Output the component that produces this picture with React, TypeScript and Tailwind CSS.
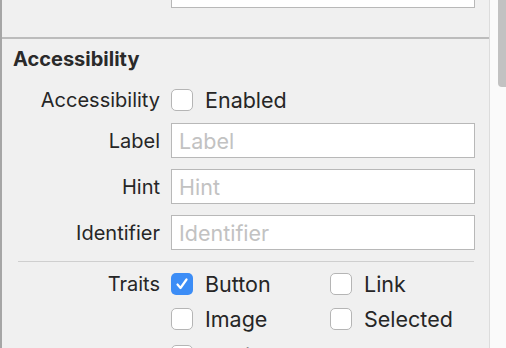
const font = { fontFamily: 'Inter, "Liberation Sans", sans-serif' }

function Check({ checked = false }: { checked?: boolean }) {
  if (checked) {
    return (
      <div className="w-[22px] h-[22px] rounded-[5px] bg-[#3c8df6] flex items-center justify-center shrink-0">
        <svg width="14" height="14" viewBox="0 0 14 14">
          <path d="M2.5 7.5 L5.5 11 L11.5 2.5" fill="none" stroke="white" strokeWidth="2.2" strokeLinecap="round" strokeLinejoin="round" />
        </svg>
      </div>
    )
  }
  return <div className="w-[22px] h-[22px] rounded-[5px] border border-[#b5b5b5] bg-white shrink-0" />
}

function Field({ placeholder }: { placeholder: string }) {
  return (
    <div className="w-[304px] h-[35px] border border-[#b8b8b8] bg-white flex items-center px-[7px] text-[21.5px] text-[#c2c2c2]">
      {placeholder}
    </div>
  )
}

function Row({ label, children, className = '' }: { label?: string; children: React.ReactNode; className?: string }) {
  return (
    <div className={`flex items-center ${className}`}>
      <div className="w-[158px] text-right text-[20px] text-[#262626] shrink-0">{label}</div>
      <div className="ml-[11px] flex items-center">{children}</div>
    </div>
  )
}

function Trait({ name, checked = false }: { name: string; checked?: boolean }) {
  return (
    <div className="w-[159px] flex items-center gap-[12px]">
      <Check checked={checked} />
      <span className="text-[21.5px] text-[#262626]">{name}</span>
    </div>
  )
}

export default function App() {
  return (
    <div className="w-[506px] h-[348px] flex overflow-hidden bg-[#f0f0f0]" style={font}>
      <div className="w-[2px] bg-[#a6a6a6] shrink-0" />
      <div className="w-[488px] shrink-0 border-r border-[#dcdcdc] flex flex-col leading-[24px]">
        <div className="ml-[169px] w-[304px] h-[8px] border-x border-b border-[#b8b8b8] bg-white shrink-0" />
        <div className="mt-[29px] h-[2px] bg-[#bcbcbc] shrink-0" />
        <div className="mt-[8px] ml-[11px] text-[20px] font-bold text-[#2a2a2a]">Accessibility</div>
        <Row label="Accessibility" className="mt-[17px]">
          <Check />
          <span className="ml-[12px] text-[21.5px] text-[#262626]">Enabled</span>
        </Row>
        <div className="mt-[11px] flex flex-col gap-[11px]">
          <Row label="Label"><Field placeholder="Label" /></Row>
          <Row label="Hint"><Field placeholder="Hint" /></Row>
          <Row label="Identifier"><Field placeholder="Identifier" /></Row>
        </div>
        <div className="mt-[11px] ml-[16px] w-[456px] h-[1px] bg-[#cfcfcf] shrink-0" />
        <Row label="Traits" className="mt-[10px]">
          <Trait name="Button" checked />
          <Trait name="Link" />
        </Row>
        <Row className="mt-[11px]">
          <Trait name="Image" />
          <Trait name="Selected" />
        </Row>
        <Row className="mt-[13px]">
          <Trait name="Static Text" />
        </Row>
      </div>
      <div className="flex-1 bg-[#fafafa] flex justify-end">
        <div className="w-[8px] h-[87px] bg-[#c2c2c2] rounded-bl-[4px]" />
      </div>
    </div>
  )
}
